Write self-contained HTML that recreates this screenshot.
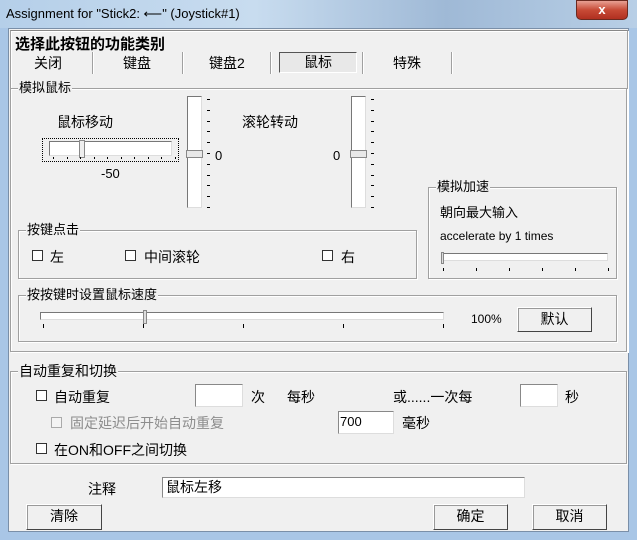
<!DOCTYPE html>
<html><head><meta charset="utf-8"><style>
*{margin:0;padding:0;box-sizing:border-box}
body{width:637px;height:540px;overflow:hidden;background:#a9c6e6;font-family:"Liberation Sans","Noto Sans CJK SC",sans-serif;font-size:13px;color:#000;position:relative}
.a{position:absolute;white-space:nowrap}
.title{left:0;top:0;width:637px;height:28px;background:linear-gradient(90deg,#b5cfe9,#c8dcef 40%,#9fb9d6 70%,#b8cfe6);}
.client{left:8px;top:28px;width:621px;height:504px;background:#f0f0f0;border:1px solid #7a8fa8}
.grp{position:absolute;border:1px solid #a0a0a0;box-shadow:1px 1px 0 #fff inset, 1px 1px 0 #fff}
.gt{position:absolute;background:#f0f0f0;padding:0 1px;line-height:14px}
.cb{position:absolute;width:11px;height:11px;border:1px solid #333;background:#fff}
.edit{position:absolute;background:#fff;border:1px solid #888;border-right-color:#ddd;border-bottom-color:#ddd}
.btn{position:absolute;background:#f0f0f0;border:1px solid #fff;border-right-color:#444;border-bottom-color:#444;box-shadow:1px 1px 0 #999 inset;text-align:center;font-size:14px}
.sep{position:absolute;width:2px;height:22px;border-left:1px solid #a0a0a0;border-right:1px solid #fff}
.tick{position:absolute;background:#000}
</style></head><body>
<div class="a title"></div>
<div class="a" style="left:6px;top:6px;font-size:13px;color:#000">Assignment for "Stick2: ⟵" (Joystick#1)</div>
<div class="a" style="left:576px;top:0;width:52px;height:20px;border-radius:0 0 5px 5px;background:linear-gradient(#e8a093,#c74a36 50%,#b03020);border:1px solid #6b2a20;color:#fff;font-weight:bold;text-align:center;line-height:18px;font-size:13px">x</div>
<div class="a client"></div>

<div class="grp" style="left:10px;top:30px;width:618px;height:322px;border-top:1px solid #888"></div>
<div class="a" style="left:15px;top:33px;font-size:15px;font-weight:bold">选择此按钮的功能类别</div>
<div class="a" style="left:34px;top:53px;font-size:14px">关闭</div>
<div class="sep" style="left:92px;top:52px"></div>
<div class="a" style="left:123px;top:53px;font-size:14px">键盘</div>
<div class="sep" style="left:182px;top:52px"></div>
<div class="a" style="left:209px;top:53px;font-size:14px">键盘2</div>
<div class="sep" style="left:270px;top:52px"></div>
<div class="a" style="left:279px;top:52px;width:78px;height:21px;border:1px solid #555;border-right-color:#fff;border-bottom-color:#fff;background:#e8e8e8;text-align:center;font-size:14px;line-height:19px">鼠标</div>
<div class="sep" style="left:362px;top:52px"></div>
<div class="a" style="left:393px;top:53px;font-size:14px">特殊</div>
<div class="sep" style="left:451px;top:52px"></div>

<div class="grp" style="left:10px;top:88px;width:617px;height:264px"></div>
<div class="gt" style="left:18px;top:81px">模拟鼠标</div>
<div class="a" style="left:57px;top:112px;font-size:14px">鼠标移动</div>
<div class="a" style="left:42px;top:138px;width:137px;height:24px;border:1px dotted #000"></div>
<div class="a" style="left:49px;top:141px;width:123px;height:15px;background:#fff;border:1px solid #777;border-right-color:#ddd;border-bottom-color:#ddd"></div>
<div class="a" style="left:79px;top:140px;width:6px;height:18px;background:#eee;border:1px solid #888"></div>
<div class="a" style="left:101px;top:166px;font-size:13px">-50</div>
<div class="a" style="left:187px;top:96px;width:15px;height:112px;background:#fff;border:1px solid #777;border-right-color:#ddd;border-bottom-color:#ddd"></div>
<div class="a" style="left:186px;top:150px;width:17px;height:8px;background:#e8e8e8;border:1px solid #888"></div>
<div class="a" style="left:215px;top:148px">0</div>
<div class="a" style="left:242px;top:112px;font-size:14px">滚轮转动</div>
<div class="a" style="left:351px;top:96px;width:15px;height:112px;background:#fff;border:1px solid #777;border-right-color:#ddd;border-bottom-color:#ddd"></div>
<div class="a" style="left:350px;top:150px;width:17px;height:8px;background:#e8e8e8;border:1px solid #888"></div>
<div class="a" style="left:333px;top:148px">0</div>

<div class="grp" style="left:428px;top:187px;width:189px;height:92px"></div>
<div class="gt" style="left:436px;top:180px">模拟加速</div>
<div class="a" style="left:440px;top:202px;font-size:13px">朝向最大输入</div>
<div class="a" style="left:440px;top:229px;font-size:12px">accelerate by 1  times</div>
<div class="a" style="left:441px;top:253px;width:167px;height:8px;background:#fff;border:1px solid #777;border-right-color:#ddd;border-bottom-color:#ddd"></div>
<div class="a" style="left:441px;top:252px;width:3px;height:12px;background:#ddd;border:1px solid #888"></div>

<div class="grp" style="left:18px;top:230px;width:399px;height:49px"></div>
<div class="gt" style="left:26px;top:223px">按键点击</div>
<div class="cb" style="left:32px;top:250px"></div><div class="a" style="left:50px;top:247px;font-size:14px">左</div>
<div class="cb" style="left:125px;top:250px"></div><div class="a" style="left:144px;top:247px;font-size:14px">中间滚轮</div>
<div class="cb" style="left:322px;top:250px"></div><div class="a" style="left:341px;top:247px;font-size:14px">右</div>

<div class="grp" style="left:18px;top:295px;width:599px;height:47px"></div>
<div class="gt" style="left:26px;top:288px">按按键时设置鼠标速度</div>
<div class="a" style="left:40px;top:312px;width:404px;height:8px;background:#fff;border:1px solid #777;border-right-color:#ddd;border-bottom-color:#ddd"></div>
<div class="a" style="left:143px;top:310px;width:4px;height:14px;background:#ddd;border:1px solid #888"></div>
<div class="a" style="left:471px;top:312px;font-size:12px">100%</div>
<div class="btn" style="left:517px;top:307px;width:75px;height:25px;line-height:22px">默认</div>

<div class="grp" style="left:10px;top:371px;width:617px;height:93px"></div>
<div class="gt" style="left:18px;top:364px;font-size:14px">自动重复和切换</div>
<div class="cb" style="left:36px;top:390px"></div><div class="a" style="left:54px;top:387px;font-size:14px">自动重复</div>
<div class="edit" style="left:195px;top:384px;width:48px;height:23px"></div>
<div class="a" style="left:251px;top:387px;font-size:14px">次</div>
<div class="a" style="left:287px;top:387px;font-size:14px">每秒</div>
<div class="a" style="left:393px;top:387px;font-size:14px">或......一次每</div>
<div class="edit" style="left:520px;top:384px;width:38px;height:23px"></div>
<div class="a" style="left:565px;top:387px;font-size:14px">秒</div>
<div class="cb" style="left:51px;top:417px;border-color:#aaa;background:#f4f4f4"></div><div class="a" style="left:70px;top:413px;font-size:14px;color:#8d8d8d">固定延迟后开始自动重复</div>
<div class="edit" style="left:338px;top:411px;width:56px;height:23px;font-size:13px;line-height:20px;padding-left:1px">700</div>
<div class="a" style="left:402px;top:413px;font-size:14px">毫秒</div>
<div class="cb" style="left:36px;top:443px"></div><div class="a" style="left:54px;top:440px;font-size:14px">在ON和OFF之间切换</div>

<div class="a" style="left:88px;top:479px;font-size:14px">注释</div>
<div class="edit" style="left:162px;top:477px;width:363px;height:21px;font-size:14px;line-height:18px;padding-left:3px">鼠标左移</div>
<div class="btn" style="left:26px;top:504px;width:76px;height:26px;line-height:23px">清除</div>
<div class="btn" style="left:433px;top:504px;width:75px;height:26px;line-height:23px">确定</div>
<div class="btn" style="left:532px;top:504px;width:75px;height:26px;line-height:23px">取消</div>

<script>
function t(x,y,w,h){var d=document.createElement('div');d.className='tick';d.style.cssText='left:'+x+'px;top:'+y+'px;width:'+w+'px;height:'+h+'px';document.body.appendChild(d);}
for(var i=0;i<11;i++){t(207,99+i*10.8,3,1);t(371,99+i*10.8,3,1);}
for(var i=0;i<10;i++){t(53+i*13.5,157,1,2);}
for(var i=0;i<6;i++){t(443+i*33,268,1,3);}
for(var i=0;i<5;i++){t(43+i*100,324,1,4);}
</script>
</body></html>
